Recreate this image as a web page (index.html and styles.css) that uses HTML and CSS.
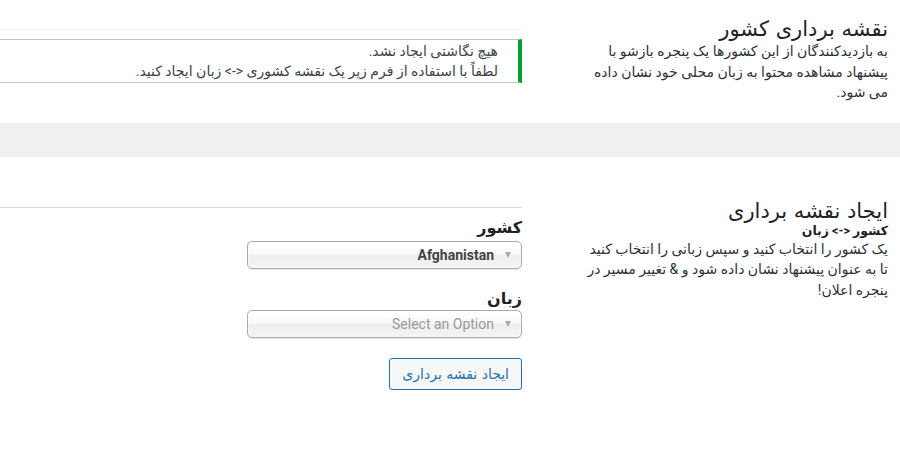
FILE: index.html
```html
<!DOCTYPE html>
<html lang="fa" dir="rtl">
<head>
  <meta charset="UTF-8">
  <meta name="viewport" content="width=device-width, initial-scale=1.0">
  <title>نقشه برداری کشور</title>
  <link rel="stylesheet" href="styles.css">
</head>
<body>
  <div class="settings-section first">
    <div class="section-info">
      <h2>نقشه برداری کشور</h2>
      <p>به بازدیدکنندگان از این کشورها یک پنجره بازشو با<br>پیشنهاد مشاهده محتوا به زبان محلی خود نشان داده<br>می شود.</p>
    </div>
    <div class="section-body light">
      <div class="notice">
        <p>هیچ نگاشتی ایجاد نشد.</p>
        <p>لطفاً با استفاده از فرم زیر یک نقشه کشوری &lt;-&gt; زبان ایجاد کنید.</p>
      </div>
    </div>
  </div>

  <div class="band"></div>

  <div class="settings-section second">
    <div class="section-info">
      <h2>ایجاد نقشه برداری</h2>
      <h3>کشور &lt;-&gt; زبان</h3>
      <p>یک کشور را انتخاب کنید و سپس زبانی را انتخاب کنید<br>تا به عنوان پیشنهاد نشان داده شود و &amp; تغییر مسیر در<br>پنجره اعلان!</p>
    </div>
    <div class="section-body">
      <div class="field">
        <label>کشور</label>
        <div class="chosen-single">
          <span class="chosen-value">Afghanistan</span>
          <b class="chosen-arrow"></b>
        </div>
      </div>
      <div class="field">
        <label>زبان</label>
        <div class="chosen-single">
          <span class="chosen-value placeholder">Select an Option</span>
          <b class="chosen-arrow"></b>
        </div>
      </div>
      <button class="button">ایجاد نقشه برداری</button>
    </div>
  </div>
</body>
</html>
```

FILE: styles.css
```css
* {
  margin: 0;
  padding: 0;
  box-sizing: border-box;
}

body {
  font-family: Roboto, "DejaVu Sans", sans-serif;
  font-size: 14px;
  color: #3c434a;
  background: #fff;
  overflow: hidden;
}

.settings-section {
  display: grid;
  grid-template-columns: 336px 560px;
  column-gap: 30px;
  padding-right: 12px;
  align-items: start;
}

.settings-section.first {
  padding-top: 17px;
}

.settings-section.second {
  padding-top: 42px;
}

.section-info h2 {
  font-family: "DejaVu Sans", sans-serif;
  font-size: 21px;
  line-height: 24px;
  font-weight: 400;
  color: #1d2327;
}

.section-info h3 {
  font-size: 12.5px;
  line-height: 16px;
  font-weight: 700;
  color: #1d2327;
}

.section-info p {
  line-height: 20.5px;
  color: #2c3338;
  white-space: nowrap;
}

.section-body {
  border-top: 1px solid #dcdcde;
  margin-top: 8px;
  padding-top: 10px;
}

.section-body.light {
  border-top-color: #f0f0f1;
  margin-top: 12px;
  padding-top: 9px;
}

.notice {
  border: 1px solid #c3c4c7;
  border-right: 4px solid #00a32a;
  padding: 1px 20px 1px 12px;
  background: #fff;
  line-height: 20px;
}

.band {
  height: 34px;
  margin-top: 20px;
  background: #f0f0f1;
}

.field {
  width: 275px;
  margin-bottom: 20px;
}

.field label {
  display: block;
  font-family: "DejaVu Sans", sans-serif;
  font-size: 16px;
  font-weight: 700;
  line-height: 20px;
  color: #1d2327;
  margin-bottom: 3px;
}

.field + .field label {
  margin-top: 4px;
  margin-bottom: 1px;
}

/* chosen-style single select */
.chosen-single {
  direction: ltr;
  height: 28px;
  display: flex;
  align-items: center;
  justify-content: flex-end;
  padding-right: 10px;
  border: 1px solid #aaa;
  border-radius: 5px;
  background: linear-gradient(#fff 20%, #f6f6f6 50%, #eee 52%, #f4f4f4 100%);
  box-shadow: inset 0 0 3px #fff, 0 1px 1px rgba(0, 0, 0, 0.1);
}

.chosen-value {
  font-weight: 700;
  color: #444;
}

.chosen-value.placeholder {
  font-weight: 400;
  color: #999;
}

.chosen-arrow {
  width: 0;
  height: 0;
  margin-left: 11px;
  border-left: 3.5px solid transparent;
  border-right: 3.5px solid transparent;
  border-top: 6px solid #aaa;
}

.button {
  margin-top: 0;
  height: 32px;
  padding: 0 12px;
  font-family: "DejaVu Sans", sans-serif;
  font-size: 14px;
  color: #2271b1;
  background: #f6f7f7;
  border: 1px solid #2271b1;
  border-radius: 3px;
  cursor: pointer;
}
```
